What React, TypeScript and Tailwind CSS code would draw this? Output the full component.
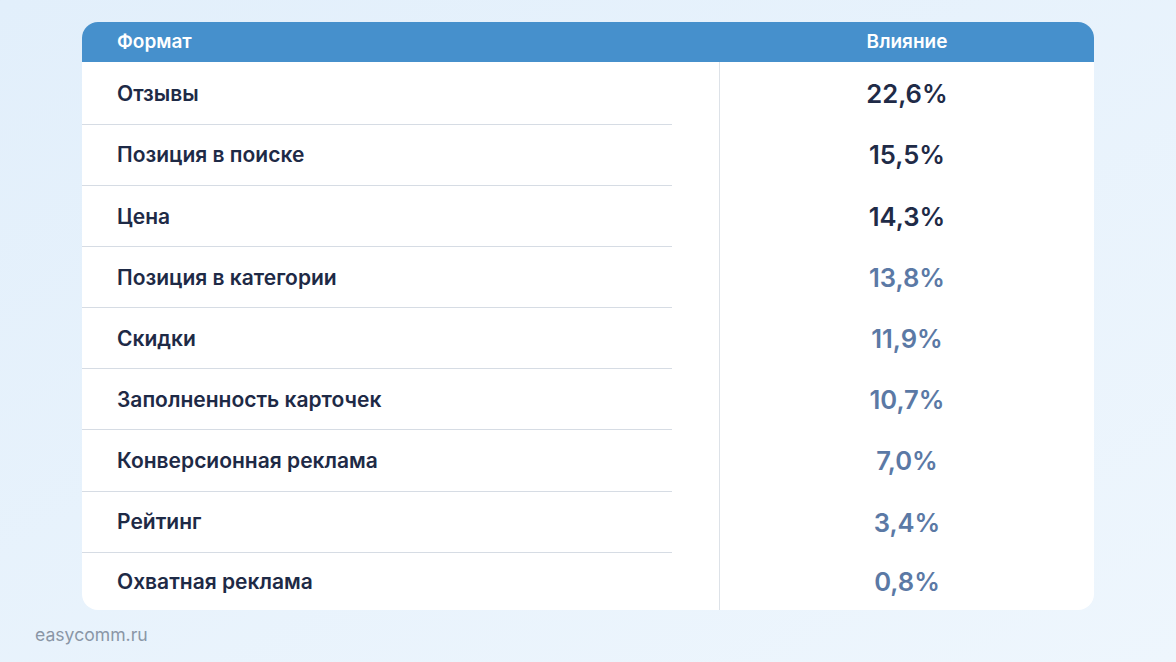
import React from "react";

const rows: { label: string; value: string; strong: boolean }[] = [
  { label: "Отзывы", value: "22,6%", strong: true },
  { label: "Позиция в поиске", value: "15,5%", strong: true },
  { label: "Цена", value: "14,3%", strong: true },
  { label: "Позиция в категории", value: "13,8%", strong: false },
  { label: "Скидки", value: "11,9%", strong: false },
  { label: "Заполненность карточек", value: "10,7%", strong: false },
  { label: "Конверсионная реклама", value: "7,0%", strong: false },
  { label: "Рейтинг", value: "3,4%", strong: false },
  { label: "Охватная реклама", value: "0,8%", strong: false },
];

export default function App() {
  return (
    <div
      className="w-[1176px] h-[662px] bg-gradient-to-br from-[#e2effb] to-[#eef6fd] flex flex-col overflow-hidden"
      style={{ fontFamily: "Inter, 'Noto Sans', sans-serif" }}
    >
      <div className="pt-[22px] pl-[82px]">
        <div className="w-[1012px] bg-white rounded-[16px] overflow-hidden">
          <div className="h-[40px] bg-[#4690cc] flex items-center text-white text-[19px] font-semibold">
            <div className="w-[638px] pl-[35px]">Формат</div>
            <div className="flex-1 text-center">Влияние</div>
          </div>
          <div className="flex">
            <div className="w-[638px] border-r border-[#dde2e8]">
              {rows.map((r, i) => (
                <div
                  key={r.label}
                  className={`flex items-center pl-[35px] mr-[47px] text-[21px] font-semibold text-[#1e2a46] ${
                    i === 0
                      ? "h-[62.5px] pt-[2px] border-b border-[#d6dce4]"
                      : i < rows.length - 1
                      ? "h-[61.2px] pt-[1px] border-b border-[#d6dce4]"
                      : "h-[57.5px] pt-[1px]"
                  }`}
                >
                  {r.label}
                </div>
              ))}
            </div>
            <div className="flex-1">
              {rows.map((r, i) => (
                <div
                  key={r.value}
                  className={`flex items-center justify-center text-[25.6px] font-semibold ${
                    i === 0 ? "h-[62.5px] pt-[2px]" : i < rows.length - 1 ? "h-[61.2px] pt-[1px]" : "h-[57.5px] pt-[1px]"
                  } ${r.strong ? "text-[#1f2b47]" : "text-[#5b79a5]"}`}
                >
                  {r.value}
                </div>
              ))}
            </div>
          </div>
        </div>
      </div>
      <div className="pl-[35px] pt-[12px] text-[17.6px] text-[#8a96a6]">easycomm.ru</div>
    </div>
  );
}
